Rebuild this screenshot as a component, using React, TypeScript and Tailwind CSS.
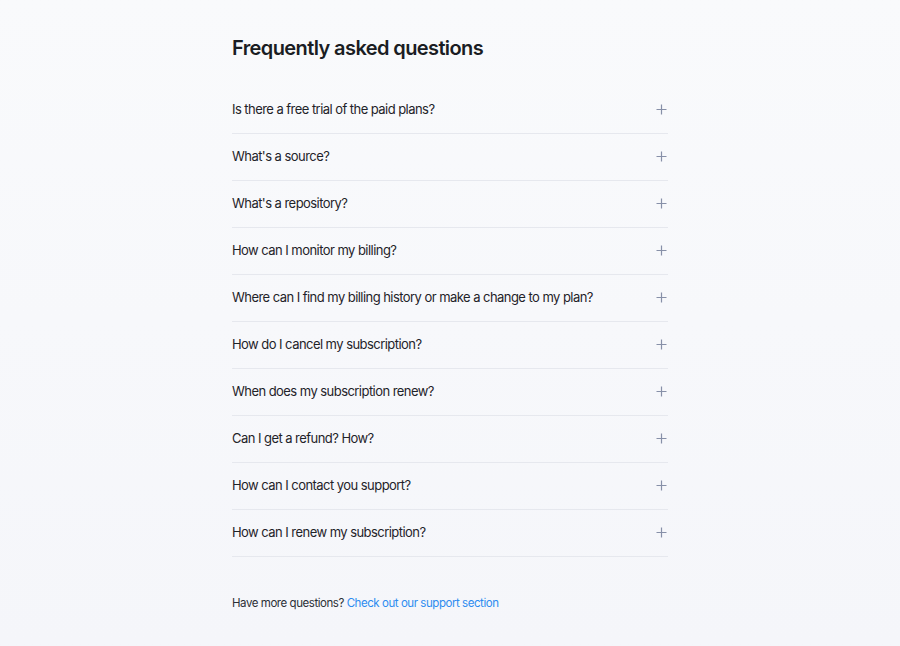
import { useState } from 'react'

const questions = [
    'Is there a free trial of the paid plans?',
    "What's a source?",
    "What's a repository?",
    'How can I monitor my billing?',
    'Where can I find my billing history or make a change to my plan?',
    'How do I cancel my subscription?',
    'When does my subscription renew?',
    'Can I get a refund? How?',
    'How can I contact you support?',
    'How can I renew my subscription?',
]

function PlusIcon() {
    return (
        <svg width="11" height="11" viewBox="0 0 11 11" fill="none" className="text-[#8790a8]">
            <path d="M5.5 0.5v10M0.5 5.5h10" stroke="currentColor" strokeWidth="1.2" />
        </svg>
    )
}

export default function App() {
    const [open, setOpen] = useState<number | null>(null)

    return (
        <div className="min-h-[646px] bg-gradient-to-b from-[#f9fafc] to-[#f5f6fa] font-['Inter',sans-serif]">
            <div className="w-[436px] mx-auto pt-[34px]">
                <h1 className="text-[20px] leading-[28px] font-semibold text-[#1a1d23] tracking-[-0.6px]">
                    Frequently asked questions
                </h1>
                <div className="mt-[25px]">
                    {questions.map((q, i) => (
                        <div key={i} className="border-b border-[#e6e8ee]">
                            <button
                                onClick={() => setOpen(open === i ? null : i)}
                                className="w-full h-[46px] pb-[1px] flex items-center justify-between text-left"
                            >
                                <span className="text-[13px] text-[#1f2329] tracking-[-0.55px]">{q}</span>
                                <span className="mr-[1px]"><PlusIcon /></span>
                            </button>
                        </div>
                    ))}
                </div>
                <p className="mt-[38px] text-[11.5px] text-[#2b2f36] tracking-[-0.45px]">
                    Have more questions?{' '}
                    <a href="#" className="text-[#2d8cf0]">Check out our support section</a>
                </p>
            </div>
        </div>
    )
}
